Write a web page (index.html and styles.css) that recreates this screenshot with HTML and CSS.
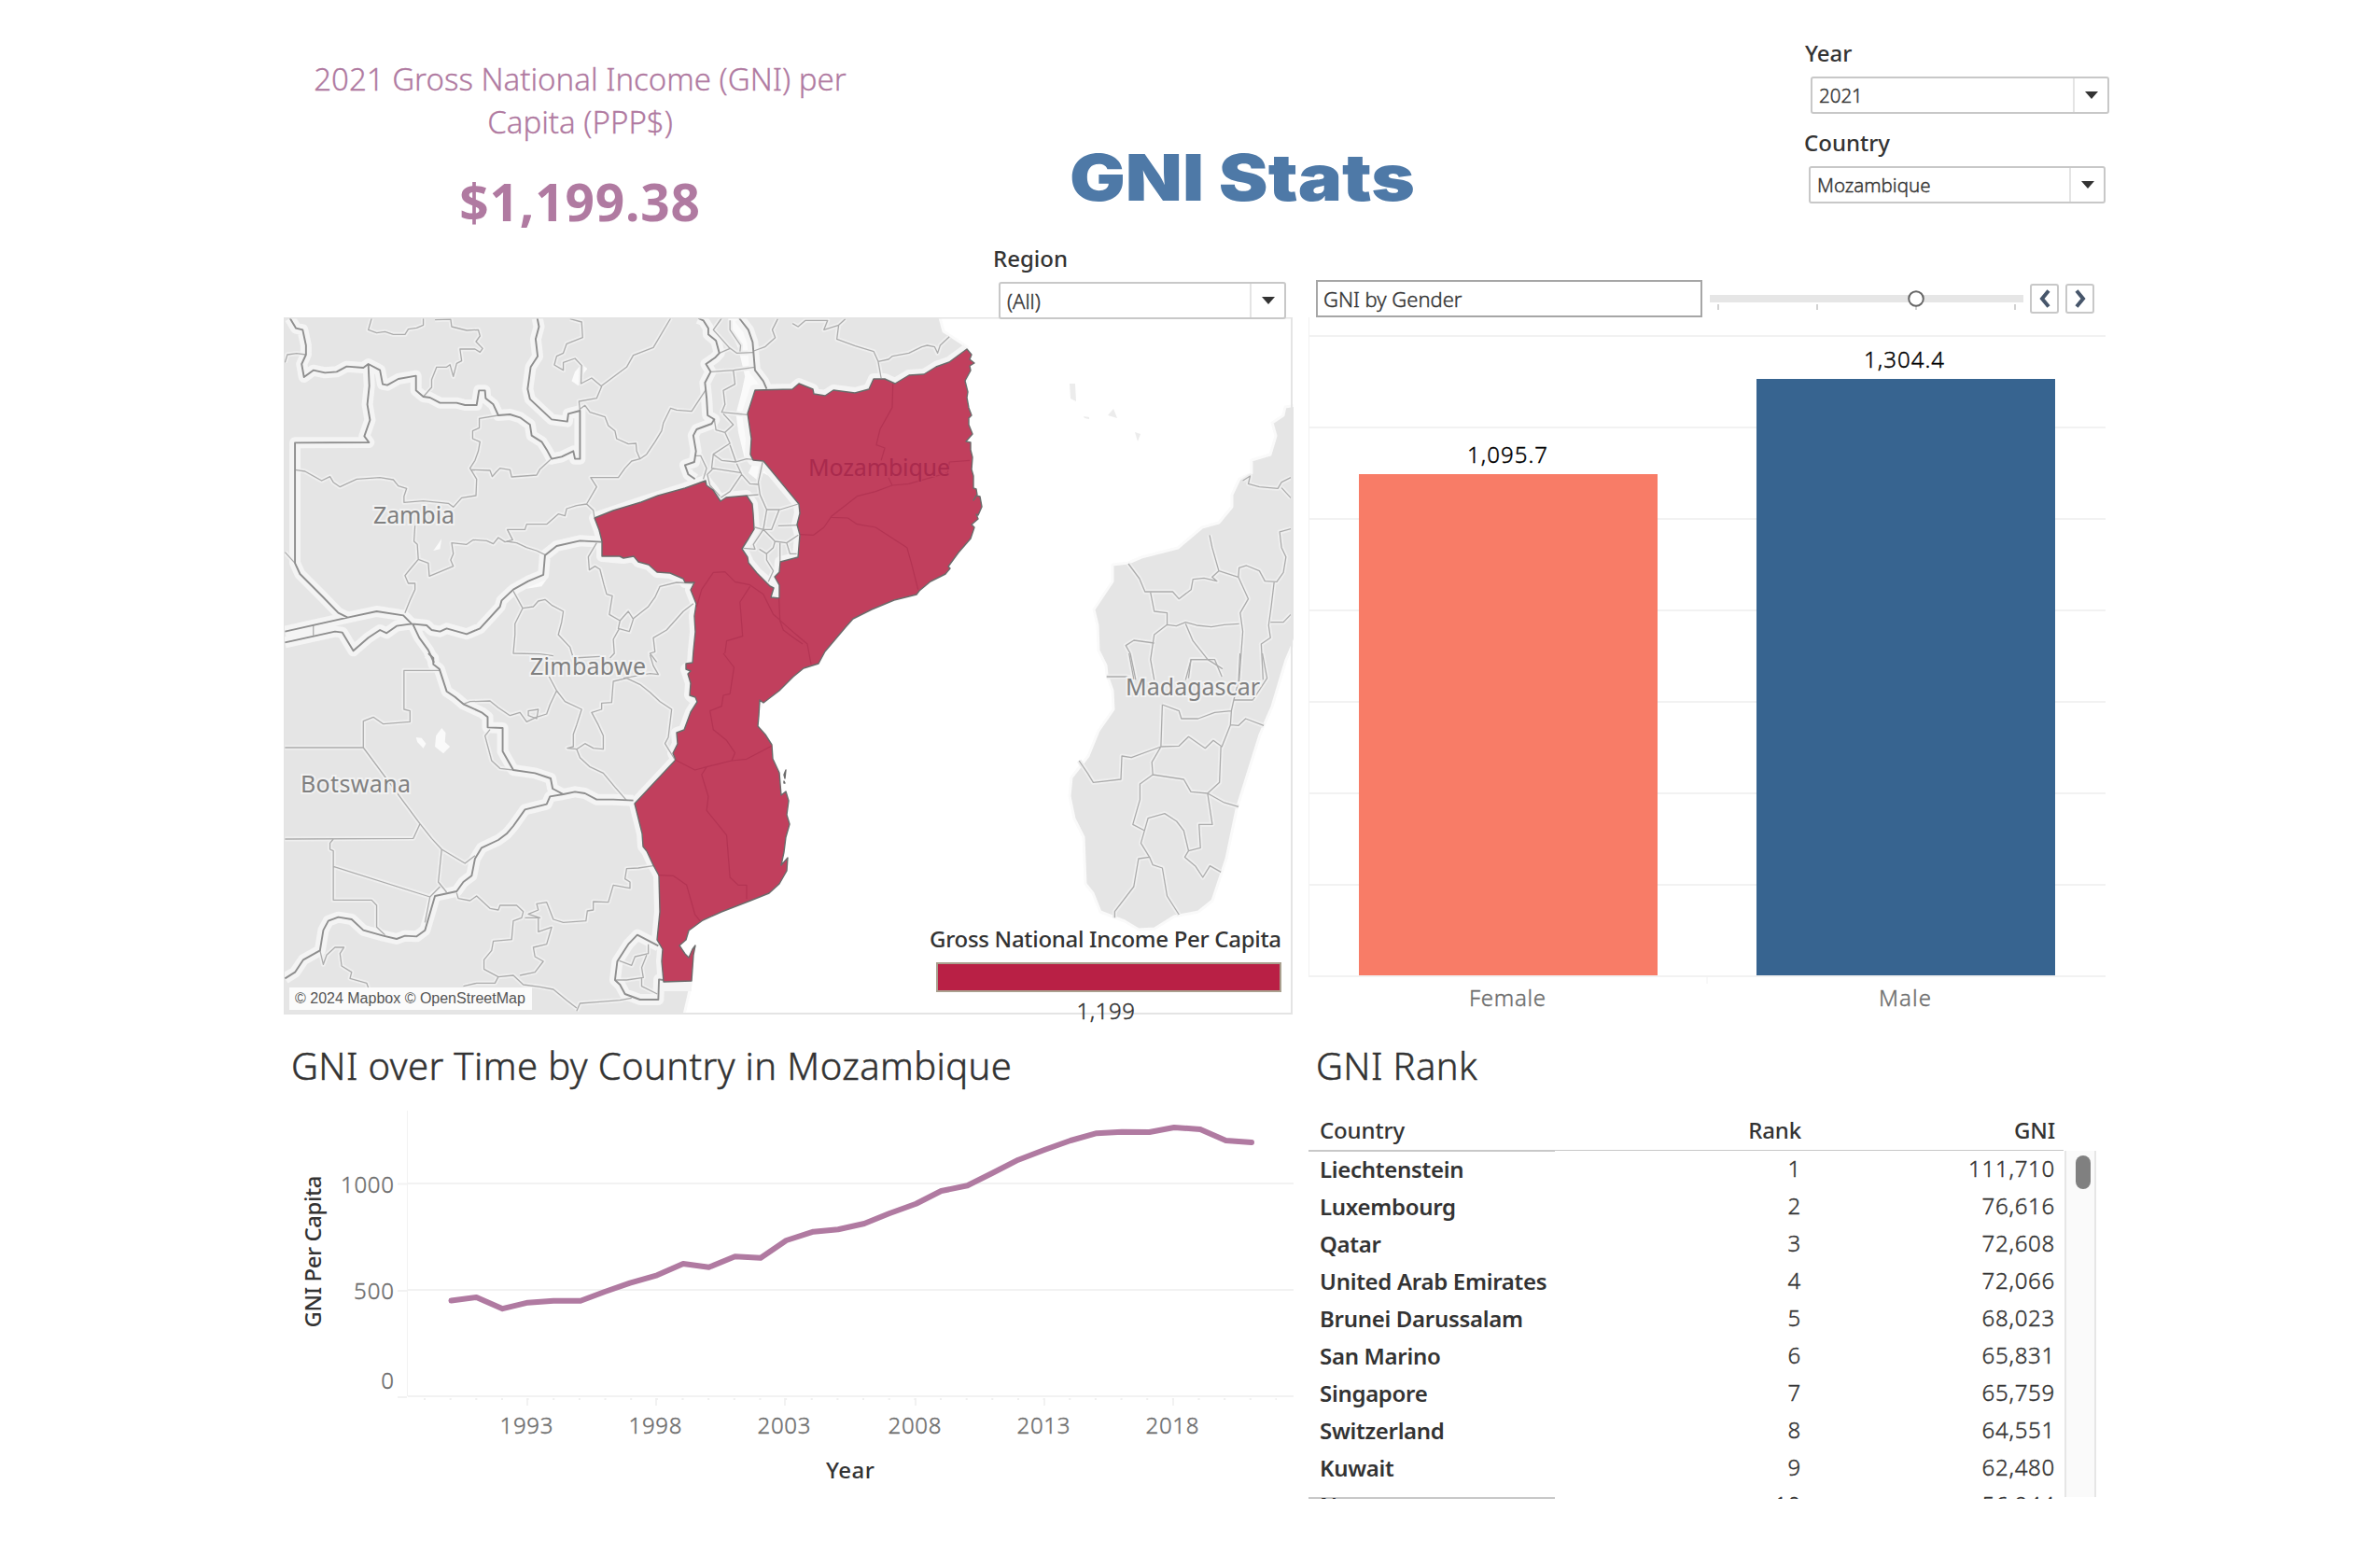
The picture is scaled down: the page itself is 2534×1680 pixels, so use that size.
FILE: index.html
```html
<!DOCTYPE html>
<html lang="en">
<head>
<meta charset="utf-8">
<title>GNI Stats</title>
<link rel="stylesheet" href="styles.css">
</head>
<body>
<main class="dashboard">
  <header class="header">
    <section class="kpi">
      <p class="kpi-label">2021 Gross National Income (GNI) per<br>Capita (PPP$)</p>
      <p class="kpi-value">$1,199.38</p>
    </section>
    <h1 class="title">GNI Stats</h1>
    <div class="filters">
      <div class="filter filter-year">
        <span class="filter-label">Year</span>
        <div class="select"><span class="select-text">2021</span><span class="select-arrow"><svg viewBox="0 0 14 8"><path d="M0 0H14L7 8Z"/></svg></span></div>
      </div>
      <div class="filter filter-country">
        <span class="filter-label">Country</span>
        <div class="select"><span class="select-text">Mozambique</span><span class="select-arrow"><svg viewBox="0 0 14 8"><path d="M0 0H14L7 8Z"/></svg></span></div>
      </div>
    </div>
  </header>

  <div class="controls">
    <div class="filter filter-region">
      <span class="filter-label">Region</span>
      <div class="select"><span class="select-text">(All)</span><span class="select-arrow"><svg viewBox="0 0 14 8"><path d="M0 0H14L7 8Z"/></svg></span></div>
    </div>
    <div class="parameter">
      <div class="parameter-value">GNI by Gender</div>
      <svg class="slider" viewBox="0 0 336 40">
        <rect class="track" x="0" y="16" width="336" height="8"/>
        <path class="ticks" d="M9 26v6M115 26v6M221 26v6M327 26v6"/>
        <circle class="knob" cx="221" cy="20" r="7.8"/>
      </svg>
      <div class="steppers">
        <button class="step" aria-label="Previous"><svg viewBox="0 0 12 20"><path d="M10 1.5L3 10L10 18.500"/></svg></button>
        <button class="step" aria-label="Next"><svg viewBox="0 0 12 20"><path d="M2 1.500L9 10L2 18.500"/></svg></button>
      </div>
    </div>
  </div>

  <section class="map-panel">
    <svg class="map" viewBox="304 340 1082 747">
      <defs>
        <g id="admin">
          <g transform="translate(300 330) scale(.35714 .33333)">
            <path d="M15 175L22 150L50 146L78 150M275 33L265 70L290 80L315 76L340 85L375 85L385 68L410 64L430 55L430 33M465 38L512 36L515 60L560 72L595 70L600 90L588 108L608 130L600 142L585 132L540 132L545 170L530 178L520 220L510 182L500 190L470 190L455 230L455 255L430 285M870 35L905 45L908 95L860 115L850 145L830 155L823 183L850 200L850 175L885 162L905 185L903 243L935 225L965 252L950 290L897 300L900 330M965 250L1040 190L1060 152L1120 127L1172 33M900 325L915 313L930 335L975 350L985 378L1005 395L1010 420L1045 437L1068 435L1070 460L1080 485L1055 492L1035 515L1015 545L932 545L950 575L920 630L890 635L860 645L855 668L835 662L800 695L740 695L735 712L682 712L698 745L675 752L655 738L640 758L620 748L580 745L560 760L515 755L520 790L512 810L520 830L480 848L448 862L445 820L415 808L390 840L375 860L385 885L405 885L405 905L390 940L375 980M1080 485L1100 470L1125 430L1145 395L1150 370L1172 322L1190 328L1235 332L1278 262M45 520L75 525L125 555L150 542L160 560L180 575L230 550L300 545L340 552L355 572L380 580L372 605L372 625L430 620L505 628L520 640L545 610L588 603L590 550L570 515L585 490L595 460L600 430L578 420L578 395L598 385L598 355L655 345M575 520L630 522L637 542L648 528L660 515L690 520L695 543L770 537L780 518L812 487M405 700L402 750L412 760L415 808M680 750L710 755L740 770L770 780L795 793M920 630L940 650L943 672M950 755L925 800L928 842L945 830L960 840L972 890L980 920L997 925L988 985L1020 1005L1045 975L1060 1000L1048 1040L1015 1030L1020 1005M1240 885L1190 882L1140 895L1125 930L1105 960L1060 998M700 910L728 965L705 1015L705 1050L700 1110L780 1112L820 1118M728 965L760 960L775 942L795 937L815 955L850 975L845 1010L835 1050L870 1090L880 1125L960 1120M1240 950L1210 975L1160 1035L1120 1060L1125 1105L1110 1110L1130 1138M1018 1030L1000 1065L1003 1110L990 1125M15 785L45 820M100 1020L100 1052"/>
            <path d="M1318 145L1350 130L1300 70L1325 33M1350 40L1350 70L1382 120L1380 140M1345 125L1370 145L1420 143M1292 205L1360 200L1425 190M1360 200L1365 245L1330 265L1335 310L1325 335L1402 343M1330 340L1360 375L1335 400L1308 392L1303 358M1335 400L1350 435L1300 470L1295 515L1385 530M1350 440L1368 495L1325 490L1300 470M1243 475L1262 475L1280 515L1270 550M1368 495L1400 485L1420 487M1300 515L1282 535L1290 570L1320 605M1370 500L1385 535L1350 590L1322 610M1385 535L1410 565L1435 567M1448 495L1435 560L1440 600L1460 648L1500 648L1555 630M1400 603L1435 600M1460 650L1450 712L1475 712L1497 650M1425 705L1450 712L1420 760L1425 775L1390 772M1495 700L1555 698M1450 712L1485 750L1520 755L1555 730M1438 775L1460 790L1480 770L1485 750M1460 790L1460 810L1480 845L1465 880M1500 755L1500 815M1520 755L1530 790L1550 790"/>
          </g>
          <g transform="translate(300 700) scale(.35714 .33333)">
            <path d="M480 55L372 55L372 180L390 185L390 220L310 227L280 205L250 218L250 303L15 303M250 303L420 548L455 595L485 630L555 675L585 650M420 548L400 595L15 597M160 597L150 610L150 630L160 635L160 793L275 793L290 810L290 880L315 905M160 685L450 783L480 750M485 630L475 735L500 768M450 783L435 865M630 245L615 265L635 345L660 370L700 375M550 163L570 155L630 153L655 175L690 200L720 190L740 220L770 205L800 195L810 165L830 120L855 155L905 180L890 230L880 260L880 300L862 305L890 308L915 290L940 305L970 308L970 265L955 230L935 190L965 180L965 160L995 158L1000 90L1040 80L1080 100L1110 125L1140 155L1175 180L1165 270L1155 290L1185 342M890 308L900 335L930 365L970 385L1005 430L1040 473M745 185L775 180L770 210L745 200ZM800 60L830 120M1110 5L1120 40L1135 68L1110 65L1030 80M530 770L535 788L570 795L590 780L630 820L655 825L660 810L710 810L730 830L725 850L700 860L695 920L640 925L635 955L612 985L612 1015L655 1040L700 1035L730 1065L780 1072L820 1080L860 1115L890 1140M655 1040L645 1060L590 1060L550 1070M890 1150L900 1125L960 1120L1020 1115L1055 1108M735 850L780 850L745 838L775 825L770 805L800 800L820 855L850 865L918 860L922 828L940 825L940 798L985 800L1000 745L1050 755L1050 735L1035 725L1040 692L1075 690L1120 683M775 850L775 895L815 880L800 935L760 945L765 975L790 990L765 1025L720 1035M120 955L130 1000L140 970L165 945L192 945L180 965L185 1005L215 1025L210 1045L260 1060L265 1075M1018 988L1055 1003L1065 975L1105 965L1105 935M1005 1050L1040 1050L1090 1042L1085 1010L1100 970M1085 1045L1085 1070L1132 1095"/>
          </g>
          <g transform="translate(780 330) scale(.39541 .33333)">
            <path d="M135 35L120 70L128 95L100 125L70 138M175 50L190 60L210 40L270 40L260 70L300 55L318 35M300 55L295 100L345 122L395 140L407 172L415 225M407 172L435 165L445 155L490 145L525 125L540 120L560 125L568 145L575 120L600 92"/>
            <path d="M1395 555L1415 540L1410 565L1440 575L1490 580L1500 560L1525 545M1500 578L1525 610M1525 710L1495 720L1500 770L1512 800L1505 850L1487 880L1455 878L1440 845L1405 828L1385 835L1383 865L1330 845L1312 770L1305 730M1330 845L1312 865L1325 878L1290 868L1260 872L1255 905L1222 935L1205 912L1130 912L1115 870L1085 822M1145 915L1155 975L1190 980L1190 1018L1215 1022L1240 1010L1270 1020L1310 1025L1345 1018L1385 1015M1383 865L1410 935L1388 980L1395 1040L1385 1200M1240 1015L1260 1070L1300 1130L1340 1160M1190 1018L1155 1050L1145 1130L1155 1195M1155 1077L1100 1068L1078 1085L1090 1110L1105 1195M1480 880L1472 960L1465 1020L1470 1060L1445 1080L1450 1195M1470 1010L1505 1010L1525 985M1240 1195L1255 1130L1300 1130"/>
          </g>
          <g transform="translate(600 700) scale(.5102 .33333)">
            <path d="M1148 75L1190 75L1205 82L1195 0M1265 165L1262 300L1200 335L1180 330L1178 405L1120 415L1108 385L1090 345M1265 165L1300 185L1305 210L1340 210L1375 190L1410 185L1415 150L1455 150M1410 185L1408 230L1425 232L1440 210L1478 232M1408 230L1390 300L1372 280L1355 305L1320 268L1300 298L1262 300M1262 300L1243 350L1245 390L1310 405L1325 445L1360 450L1385 415L1388 300M1245 390L1218 420L1218 470L1203 550L1228 570M1360 450L1370 550L1342 550L1345 625L1320 635L1310 570L1295 540L1270 515L1235 530L1220 610L1238 655L1215 660L1205 750L1165 830L1165 850M1360 450L1395 480L1425 493M1320 635L1312 655L1335 685L1350 720L1365 683L1388 703M1238 655L1245 680L1265 690L1275 780L1300 840M1415 150L1425 90L1428 0M1320 80L1325 20L1375 20L1390 75M1475 0L1485 80L1455 150"/>
          </g>
        </g>
        <g id="borders">
          <g transform="translate(300 330) scale(.35714 .33333)">
            <path d="M30 33L48 65L68 70L78 120L78 150L65 180L72 222L100 200L135 208L170 205L200 188L250 192L265 180L300 200L308 245L322 248L355 228L408 218L408 265L430 285L450 288L480 305L530 305L555 312L590 312L597 265L615 265L617 290L640 310L655 345L690 342L720 352L750 375L755 410L785 430L800 455L815 485L845 478L880 460L885 485L900 485L900 330L865 340L862 365L815 358L750 293L743 260L752 190L773 155L767 100L777 60L772 33M265 180L268 250L262 310L270 360L253 412L267 432L45 433L45 820L60 855L130 930L175 980L203 995M15 1040L203 995L290 975L370 988L395 1015L440 1020L455 1035L480 1040L500 1030L560 1048L600 1030L660 960L665 940L700 905L745 878L790 858L795 795L830 765L900 748L965 752M15 1075L165 1040L187 1043L220 1102L265 1060L300 1035L320 1045L350 1022L395 1015M398 1015L418 1060L445 1100L462 1140M1255 33L1270 40L1285 65L1285 85L1308 105L1318 145L1305 160L1278 180L1292 205L1275 240L1280 290L1283 345L1303 358L1295 372L1250 390L1240 410L1248 460L1243 495L1215 505L1225 535L1245 550M1378 33L1405 70L1418 110L1425 200L1450 235L1460 260"/>
          </g>
          <g transform="translate(300 700) scale(.35714 .33333)">
            <path d="M445 0L460 15L460 35L478 50L500 122L525 140L550 163L605 190L623 205L623 238L668 240L668 315L700 375L765 385L812 402L818 435L850 453L885 445L915 450L950 470L1000 470L1060 473M850 453L810 460L800 485L735 502L700 555L680 580L655 600L605 625L585 660L575 715L550 735L530 765L465 780L435 890L410 910L375 908L350 918L310 908L250 890L215 855L175 848L145 860L130 890L120 955L70 985L45 1025L15 1045M1135 940L1072 905L1045 935L1012 990L1005 1050L1020 1065L1035 1095L1080 1113L1135 1113L1137 1048L1150 1050"/>
          </g>
        </g>
        <path id="mozambique" d="M637 555L657 547L687 538L705 531L734 523L756 515L757 520L764 525L772 537L778 533L800 531L806 540L807 550L808 567L802 577L795 588L801 597L802 603L811 614L825 628L829 630L826 640L835 641L835 627L830 618L835 613L836 602L855 597L857 573L854 562L857 550L856 540L818 494L807 493L804 487L805 470L801 443L809 418L849 417L856 411L871 417L872 422L884 424L893 418L916 421L931 417L936 406L948 406L959 411L974 402L990 401L1003 393L1017 388L1036 374L1041 380L1039 385L1044 389L1039 392L1040 397L1034 408L1037 420L1036 426L1038 437L1041 445L1038 448L1038 455L1042 465L1035 473L1040 474L1040 482L1042 490L1041 503L1043 510L1043 523L1046 524L1047 530L1043 536L1046 531L1050 532L1052 543L1048 552L1046 551L1048 556L1041 562L1044 565L1040 577L1027 592L1016 607L1018 609L1013 615L997 623L985 633L982 637L958 643L934 653L914 663L906 672L895 685L884 698L877 711L861 716L850 725L835 740L818 753L814 750L813 767L812 778L820 787L827 798L828 813L835 828L837 852L842 848L845 858L843 873L846 883L842 897L840 913L837 927L844 919L843 933L835 947L824 957L804 965L773 977L753 986L738 997L735 1007L728 1013L734 1022L738 1026L742 1017L745 1013L743 1023L741 1051L711 1052L709 1030L710 1017L704 1007L707 977L706 938L700 927L693 912L689 907L688 893L680 861L724 814L721 807L726 797L725 785L733 782L740 763L747 752L745 747L739 745L740 732L737 722L740 719L735 717L735 711L742 710L743 697L745 677L744 660L746 647L740 632L744 624L734 624L732 620L718 614L704 613L695 605L684 602L679 596L668 598L664 596L645 596L645 580L642 568Z"/>
        <path id="madagascar" d="M1396 433L1377 436L1375 445L1363 453L1367 467L1361 487L1341 493L1341 507L1328 513L1320 530L1320 543L1306 560L1288 565L1262 587L1223 597L1209 603L1192 605L1192 623L1172 653L1176 670L1177 697L1185 713L1186 723L1192 740L1193 760L1177 783L1166 810L1148 833L1146 853L1151 877L1161 897L1163 947L1171 957L1179 977L1205 987L1220 996L1237 995L1258 982L1284 977L1299 965L1314 920L1325 867L1350 787L1363 757L1378 707L1396 665Z"/>
      </defs>
      <path class="land" d="M290 325L1004 325L1007 340L1011 355L1037 372L1036 420L1030 560L985 630L900 660L820 748L805 775L830 900L820 950L725 985L722 1050L741 1052L737 1070L730 1100L290 1100Z"/>
      <use class="land" href="#madagascar"/>
      <path class="islet" d="M1146 411L1152 411L1153 430L1147 427ZM1193 438L1197 448L1187 445ZM1161 446L1167 447L1167 449L1162 448ZM1216 463L1222 465L1219 473Z"/>
      <g transform="translate(300 330) scale(.35714 .33333)">
        <path class="water" d="M1345 33L1378 33L1405 70L1418 130L1425 205L1458 255L1425 265L1403 340L1414 485L1393 480L1375 400L1368 340L1385 270L1395 220L1375 130L1345 60ZM1418 500L1450 493L1556 625L1535 615L1500 560L1450 530L1440 560L1405 530ZM905 180L922 195L905 220L895 250L875 235L885 205ZM748 885L800 872L785 895L740 902ZM460 780L485 742L480 775Z"/>
      </g>
      <g transform="translate(300 700) scale(.35714 .33333)">
        <path class="water" d="M485 240L497 255L495 285L510 300L490 322L465 300L468 265ZM408 270L425 272L438 290L430 305L412 285Z"/>
      </g>
      <use class="admin-casing" href="#admin"/>
      <use class="border-casing" href="#borders"/>
      <path class="border-casing" d="M741 1056L711 1056L709 1030L710 1017L704 1007L707 977L706 938L700 927L693 912L689 907L688 893L680 861L724 814L721 807L726 797L725 785L733 782L740 763L747 752L739 745L740 732L735 717L742 712L743 697L745 677L744 660L746 647L740 632L744 624L734 624L732 620L718 614L704 613L695 605L684 602L679 596L668 598L645 596L645 580L642 568L637 555L687 538L734 523L756 515L764 525L772 537L778 533L800 531L806 540L808 567L802 577L795 588L802 603L811 614L829 630L826 640L835 641L830 618L835 613L836 602L855 597L857 573L854 562L857 550L856 540L818 494L807 493L804 487L805 470L801 443L809 418L849 417L856 411L871 417L872 422L884 424L893 418L916 421L931 417L936 406L948 406L959 411L974 402L990 401L1003 393L1017 388L1036 374"/>
      <use class="admin-line" href="#admin"/>
      <use class="border-line" href="#borders"/>
      <use class="highlight" href="#mozambique"/>
      <path class="highlight" d="M842 825L841 834L840 830ZM840 837L841 839L840 839Z"/>
      <g class="province">
        <g transform="translate(300 330) scale(.35714 .33333)">
          <path d="M1250 960L1265 905L1300 850L1335 848L1365 880L1410 890L1450 920L1480 985L1500 1003M1410 895L1380 945L1388 1055L1340 1070L1335 1110M1497 932L1500 1005L1510 1035L1535 1055L1568 1080"/>
        </g>
        <g transform="translate(780 330) scale(.39541 .33333)">
          <path d="M447 243L445 320L412 390L402 440L425 450L415 490M435 545L445 570L400 590L350 605L280 670L260 705L232 730L195 728M280 673L325 675L350 695L400 705L485 770L497 820L515 905M445 570L490 565L595 530L600 495L655 490M140 1003L180 1045L215 1080L225 1145"/>
        </g>
        <g transform="translate(300 700) scale(.35714 .33333)">
          <path d="M1330 0L1362 45L1350 130L1330 135L1325 170L1290 185L1300 245L1340 280L1365 320L1355 345M1185 342L1245 375L1280 365L1355 345L1400 340L1475 298M1280 365L1265 390L1285 460L1280 505L1340 585L1350 720L1375 745L1400 745L1400 790M1135 713L1180 715L1220 745L1245 840L1260 860"/>
        </g>
      </g>
      <g class="places">
        <text x="400" y="561" textLength="87">Zambia</text>
        <text x="568" y="723" textLength="124">Zimbabwe</text>
        <text x="322" y="849" textLength="118">Botswana</text>
        <text x="1206" y="745" textLength="144">Madagascar</text>
        <text class="place-selected" x="866" y="510" textLength="152">Mozambique</text>
      </g>
      <rect class="frame" x="304" y="340.500" width="1080" height="745.500"/>
    </svg>
    <div class="attribution">© 2024 Mapbox © OpenStreetMap</div>
    <div class="legend">
      <span class="legend-title">Gross National Income Per Capita</span>
      <span class="legend-ramp"></span>
      <span class="legend-value">1,199</span>
    </div>
  </section>

  <section class="gender-panel">
    <svg class="gender-chart" viewBox="1402 340 854 747">
      <path class="grid" d="M1402 360H2256M1402 458H2256M1402 556H2256M1402 654H2256M1402 752H2256M1402 850H2256M1402 948H2256M1402 1046H2256"/>
      <path class="axis" d="M1402.500 340V1046M1829 1046V1054"/>
      <rect class="bar-female" x="1456" y="508" width="320" height="537"/>
      <rect class="bar-male" x="1882" y="406" width="320" height="639"/>
      <g class="bar-values">
        <text x="1615" y="496" textLength="86">1,095.7</text>
        <text x="2040" y="394" textLength="86">1,304.4</text>
      </g>
      <g class="bar-names">
        <text x="1615" y="1078" textLength="82">Female</text>
        <text x="2041" y="1078" textLength="56">Male</text>
      </g>
    </svg>
  </section>

  <section class="trend-panel">
    <h2 class="panel-title">GNI over Time by Country in Mozambique</h2>
    <svg class="trend-chart" viewBox="304 1180 1082 430">
      <path class="grid" d="M426 1268.500H436M426 1383H436M426 1497H436M437 1268H1386M437 1382H1386M437 1496H1386"/>
      <path class="axis" d="M436.500 1190V1496"/>
      <path class="grid" d="M565 1498V1506M703 1498V1506M841 1498V1506M981 1498V1506M1119 1498V1506M1257 1498V1506"/>
      <path class="minor" d="M454 1499H1368"/>
      <polyline class="trend" points="483.500,1393.500 510.500,1390 538.500,1402.200 565.500,1395.700 593,1393.700 622,1393.700 648,1384 675,1374.700 704,1366.300 732,1354 759.500,1357.700 787.500,1346.300 815,1347.700 842.500,1329 871.500,1319.700 898,1317.300 926,1311 952.500,1300.300 981.500,1289.700 1008.500,1276 1036.500,1270.300 1063.500,1256.700 1091,1242.700 1119,1232 1147,1222 1175,1214.200 1202,1212.700 1231.500,1213 1258,1208 1286,1210 1313.500,1222 1341,1224"/>
      <g class="y-labels">
        <text x="422" y="1278" textLength="57">1000</text>
        <text x="422" y="1392" textLength="43">500</text>
        <text x="422" y="1488">0</text>
      </g>
      <g class="x-labels">
        <text x="564" y="1536" textLength="57">1993</text>
        <text x="702" y="1536" textLength="57">1998</text>
        <text x="840" y="1536" textLength="57">2003</text>
        <text x="980" y="1536" textLength="57">2008</text>
        <text x="1118" y="1536" textLength="57">2013</text>
        <text x="1256" y="1536" textLength="57">2018</text>
      </g>
      <text class="axis-title" x="911" y="1584" textLength="52">Year</text>
      <text class="axis-title" transform="translate(344 1341) rotate(-90)" textLength="163">GNI Per Capita</text>
    </svg>
  </section>

  <section class="rank-panel">
    <h2 class="panel-title">GNI Rank</h2>
    <div class="rank-head"><span>Country</span><span>Rank</span><span>GNI</span></div>
    <div class="rank-body">
      <div class="rank-rows">
        <div class="rank-row"><b>Liechtenstein</b><span>1</span><span>111,710</span></div>
        <div class="rank-row"><b>Luxembourg</b><span>2</span><span>76,616</span></div>
        <div class="rank-row"><b>Qatar</b><span>3</span><span>72,608</span></div>
        <div class="rank-row"><b>United Arab Emirates</b><span>4</span><span>72,066</span></div>
        <div class="rank-row"><b>Brunei Darussalam</b><span>5</span><span>68,023</span></div>
        <div class="rank-row"><b>San Marino</b><span>6</span><span>65,831</span></div>
        <div class="rank-row"><b>Singapore</b><span>7</span><span>65,759</span></div>
        <div class="rank-row"><b>Switzerland</b><span>8</span><span>64,551</span></div>
        <div class="rank-row"><b>Kuwait</b><span>9</span><span>62,480</span></div>
        <div class="rank-row"><b>Norway</b><span>10</span><span>56,944</span></div>
      </div>
      <div class="scrollbar"><span class="thumb"></span></div>
    </div>
  </section>
</main>
</body>
</html>
```
FILE: styles.css
```css
* { box-sizing: border-box; }

body {
  margin: 0;
  background: #fff;
  color: #333;
  font-family: "Noto Sans", "Open Sans", sans-serif;
  font-size: 24px;
}

p, h1, h2 { margin: 0; font-weight: 400; }
svg { display: block; }

.dashboard {
  width: 1952px;
  margin-left: 304px;
  display: grid;
  grid-template-columns: 1082px 854px;
  grid-template-rows: 250px 90px 747px 531px;
  column-gap: 16px;
}

/* Header */
.header { grid-column: 1 / 3; display: flex; }
.header > * { flex: none; }
.kpi { width: 633px; padding: 62px 0 0 2px; text-align: center; color: #b07aa1; }
.kpi-label { font-size: 33px; line-height: 46px; font-weight: 300; -webkit-text-stroke: .3px; }
.kpi-value { margin-top: 22px; font-size: 55px; line-height: 80px; font-weight: 700; letter-spacing: .8px; }
.title {
  width: 784px;
  padding-top: 148px;
  text-align: center;
  font-family: Inter, "Liberation Sans", sans-serif;
  font-size: 69px;
  line-height: 84px;
  font-weight: 900;
  color: #4e79a7;
  transform: translateX(2px) scaleX(1.15);
}
.filters { margin-left: 212px; padding-top: 40px; }
.filter-label { display: block; height: 34px; line-height: 34px; font-weight: 500; }
.filter-year { padding-left: 1px; height: 96px; }
.filter-year .select { margin: 8px 0 0 6px; width: 320px; }
.filter-country .select { margin: 8px 0 0 5px; width: 318px; }

.select {
  display: flex;
  height: 40px;
  border: 2px solid #c8c8c8;
  border-radius: 3px;
  background: #fff;
  font-size: 20.500px;
  font-weight: 300;
  line-height: 36px;
  -webkit-text-stroke: .4px;
}
.select-text { flex: 1; padding-left: 7px; }
.select-arrow {
  width: 37px;
  border-left: 2px solid #e4e4e4;
  display: flex;
  align-items: center;
  justify-content: center;
}
.select-arrow svg { width: 14px; height: 8px; fill: #333; }

/* Region filter and sheet switcher */
.controls { grid-column: 1 / 3; display: flex; position: relative; z-index: 1; }
.filter-region { margin-left: 760px; padding-top: 10px; width: 346px; }
.filter-region .select { margin: 8px 0 0 6px; width: 308px; font-size: 22px; }
.parameter { display: flex; height: 40px; margin-top: 50px; }
.parameter-value {
  width: 414px;
  border: 2px solid #a6a6a6;
  padding-left: 6px;
  font-size: 22px;
  font-weight: 300;
  line-height: 37px;
  -webkit-text-stroke: .4px;
}
.slider { width: 336px; height: 40px; margin-left: 8px; }
.track { fill: #e6e6e6; }
.ticks { stroke: #c4c4c4; stroke-width: 1.500px; }
.knob { fill: #fff; stroke: #666; stroke-width: 2px; }
.steppers { display: flex; gap: 7px; margin: 4px 0 0 7px; }
.step {
  width: 31px;
  height: 32px;
  padding: 0;
  border: 2px solid #c8c8c8;
  border-radius: 3px;
  background: #fff;
  display: flex;
  align-items: center;
  justify-content: center;
}
.step svg { width: 12px; height: 20px; fill: none; stroke: #47566b; stroke-width: 4px; }

/* Map */
.map-panel { position: relative; }
.map { width: 1082px; height: 747px; }
.map path { vector-effect: non-scaling-stroke; stroke-linejoin: round; }
.land { fill: #e5e5e5; stroke: #fafafa; stroke-width: 3px; }
.islet { fill: #ececec; }
.water { fill: #fafafa; }
.admin-casing { fill: none; stroke: #efefef; stroke-width: 5px; }
.admin-line { fill: none; stroke: #acacac; stroke-width: 1.300px; }
.border-casing { fill: none; stroke: #f4f4f4; stroke-width: 12px; }
.border-line { fill: none; stroke: #8e8e8e; stroke-width: 1.900px; }
.highlight { fill: #c13f5d; stroke: #6b6b6b; stroke-width: 1.400px; }
.province { fill: none; stroke: #b33453; stroke-width: 1.200px; }
.frame { fill: none; stroke: #e4e4e4; stroke-width: 2px; }
.places text {
  font-size: 25px;
  fill: #808080;
  stroke: #f2f2f2;
  stroke-width: 4px;
  paint-order: stroke;
}
.places .place-selected { fill: #a92a4d; stroke: #c13f5d; stroke-width: 2px; }

.attribution {
  position: absolute;
  left: 6px;
  bottom: 5px;
  height: 24px;
  width: 260px;
  padding-left: 6px;
  background: rgba(255, 255, 255, .85);
  font: 16px/24px "Liberation Sans", Arial, sans-serif;
  white-space: nowrap;
  color: #555;
}
.legend {
  position: absolute;
  left: 693px;
  top: 650px;
  width: 376px;
  display: flex;
  flex-direction: column;
}
.legend-title {
  height: 34px;
  margin-left: -1px;
  line-height: 31px;
  font-weight: 500;
  letter-spacing: -.3px;
  white-space: nowrap;
}
.legend-ramp {
  height: 32px;
  margin: 7px 0 0 6px;
  border: 2px solid #aaa08f;
  background: #b92045;
}
.legend-value {
  margin-top: 3px;
  line-height: 34px;
  text-align: center;
  font-weight: 300;
  letter-spacing: .6px;
  -webkit-text-stroke: .4px;
}

/* Charts */
.gender-chart { width: 854px; height: 747px; }
.grid { fill: none; stroke: #f2f2f2; stroke-width: 2px; }
.axis { fill: none; stroke: #f2f2f2; stroke-width: 1px; }
.bar-female { fill: #f87c67; }
.bar-male { fill: #376490; }
.gender-chart, .trend-chart { font-weight: 300; }
.bar-values text { text-anchor: middle; fill: #000; stroke: #000; stroke-width: .4px; }
.bar-names text,
.x-labels text { text-anchor: middle; fill: #6e6e6e; stroke: #6e6e6e; stroke-width: .4px; }
.y-labels text { text-anchor: end; fill: #6e6e6e; stroke: #6e6e6e; stroke-width: .4px; }

.panel-title {
  font-size: 40px;
  line-height: 56px;
  font-weight: 300;
  letter-spacing: .4px;
  white-space: nowrap;
  -webkit-text-stroke: .5px;
}
.trend-panel .panel-title { padding: 27px 0 0 8px; height: 93px; }
.trend-chart { width: 1082px; height: 430px; }
.minor { stroke: #f0f0f0; stroke-width: 2px; stroke-dasharray: 2 25.650; }
.trend { fill: none; stroke: #b07aa1; stroke-width: 6px; stroke-linejoin: round; stroke-linecap: round; }
.trend-chart .axis-title { text-anchor: middle; fill: #333; font-weight: 500; }

/* Ranking table */
.rank-panel .panel-title { padding: 27px 0 0 8px; height: 108px; }
.rank-head, .rank-row {
  display: grid;
  grid-template-columns: 264px 252px 272px;
  width: 809px;
  padding-left: 12px;
}
.rank-head span:nth-child(n+2), .rank-row span { text-align: right; }
.rank-head {
  height: 38px;
  line-height: 32px;
  font-weight: 500;
  letter-spacing: -.15px;
  border-bottom: 1px solid #c8c8c8;
}
.rank-body { display: flex; height: 373px; }
.rank-rows {
  width: 809px;
  height: 373px;
  overflow: hidden;
  background:
    linear-gradient(#c8c8c8, #c8c8c8) 0 0 / 264px 1px no-repeat,
    linear-gradient(#c8c8c8, #c8c8c8) 0 100% / 264px 2px no-repeat;
}
.rank-row { height: 40px; line-height: 40px; }
.rank-row b { font-weight: 600; letter-spacing: -.3px; white-space: nowrap; }
.rank-row span {
  line-height: 38px;
  font-weight: 300;
  letter-spacing: .75px;
  -webkit-text-stroke: .4px;
}
.scrollbar {
  width: 34px;
  height: 371px;
  margin-left: 1px;
  border: solid #e6e6e6;
  border-width: 0 2px;
  background: #fafafa;
  padding: 5px 0 0 10px;
}
.thumb { display: block; width: 16px; height: 36px; border-radius: 8px; background: #808080; }
```
